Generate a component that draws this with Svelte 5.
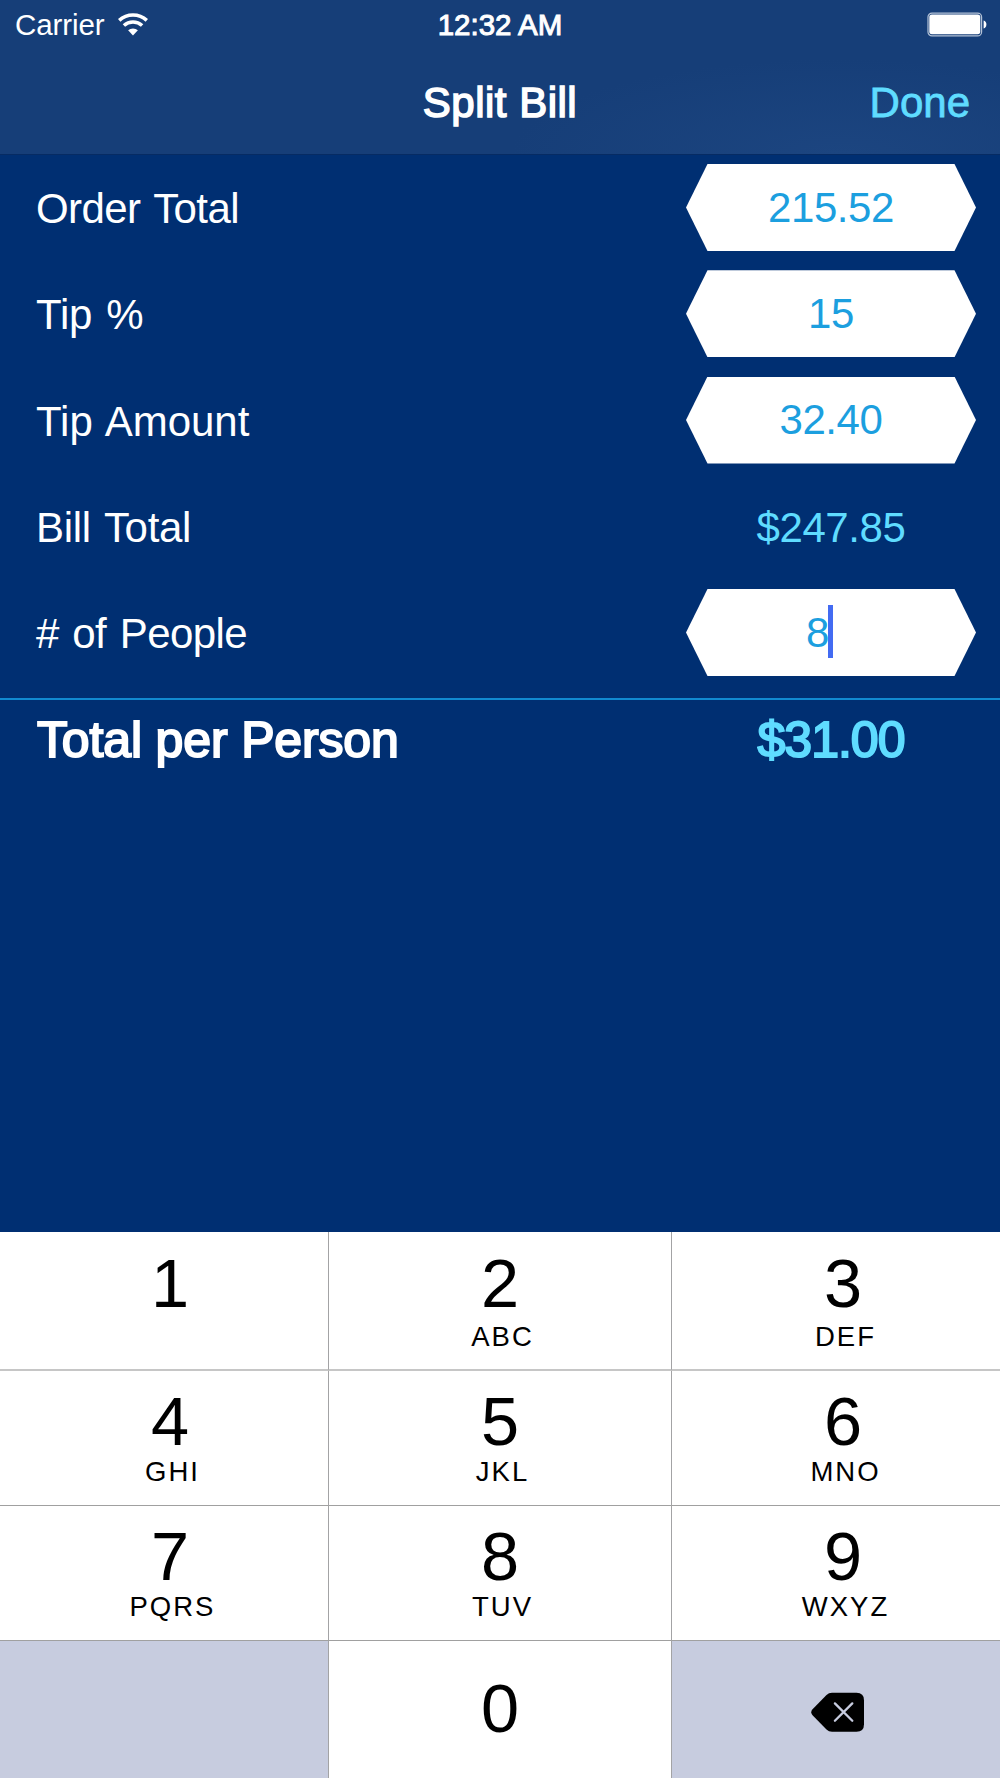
<script>
  const rows = [
    { label: 'Order Total', tracking: -0.6, value: '215.52', field: true },
    { label: 'Tip %', tracking: -0.2, value: '15', field: true },
    { label: 'Tip Amount', tracking: 0, value: '32.40', field: true },
    { label: 'Bill Total', tracking: -0.3, value: '$247.85', field: false },
    { label: '# of People', tracking: -0.6, value: '8', field: true, active: true }
  ];

  const keys = [
    { digit: '1', letters: '' },
    { digit: '2', letters: 'ABC' },
    { digit: '3', letters: 'DEF' },
    { digit: '4', letters: 'GHI' },
    { digit: '5', letters: 'JKL' },
    { digit: '6', letters: 'MNO' },
    { digit: '7', letters: 'PQRS' },
    { digit: '8', letters: 'TUV' },
    { digit: '9', letters: 'WXYZ' }
  ];
</script>

<div class="screen">
  <header>
    <div class="status">
      <div class="carrier">
        <span>Carrier</span>
        <svg class="wifi" width="30" height="23" viewBox="0 0 30 23" fill="none" stroke="#fff">
          <path d="M1.2 7.4A20.4 20.4 0 0 1 28.8 7.4" stroke-width="3.6" />
          <path d="M5.900 12.500A13.400 13.400 0 0 1 24.100 12.500" stroke-width="3.500" />
          <path d="M10.100 17.300A7.300 7.300 0 0 1 19.900 17.300L15 22.400Z" fill="#fff" stroke="none" />
        </svg>
      </div>
      <span class="time">12:32 AM</span>
      <svg class="battery" width="60" height="25" viewBox="0 0 60 25">
        <rect x="1" y="1.1" width="53.6" height="22.8" rx="4" fill="none" stroke="#b4c2d6" stroke-width="1.2" />
        <rect x="2.3" y="2.4" width="51" height="19.8" rx="2.6" fill="#fff" />
        <path d="M56.6 8.6Q59.4 9.4 59.4 12.6T56.6 16.6Z" fill="#fff" />
      </svg>
    </div>
    <nav>
      <span></span>
      <h1>Split Bill</h1>
      <button class="done">Done</button>
    </nav>
  </header>

  <main>
    <div class="rows">
      {#each rows as row}
        <div class="row">
          <span class="label" style="letter-spacing: {row.tracking}px">{row.label}</span>
          {#if row.field}
            <div class="value field" class:active={row.active}>
              <span class="num">{row.value}</span>
              {#if row.active}<i class="caret"></i>{/if}
            </div>
          {:else}
            <div class="value computed">{row.value}</div>
          {/if}
        </div>
      {/each}
    </div>
    <div class="total">
      <span class="total-label">Total per Person</span>
      <div class="value total-value">$31.00</div>
    </div>
  </main>

  <div class="keypad">
    {#each keys as key}
      <button class="key">
        <span class="digit">{key.digit}</span>
        <span class="letters">{key.letters}</span>
      </button>
    {/each}
    <div class="key blank"></div>
    <button class="key zero"><span class="digit">0</span></button>
    <button class="key blank erase" aria-label="Delete">
      <svg width="54" height="40" viewBox="0 0 54 40">
        <path d="M21 .7H45.500Q53 .7 53 8.200V32.200Q53 39.700 45.500 39.700H21Q17.800 39.700 15.500 37.500L1.300 22.900Q-.8 20.200 1.300 17.500L15.500 2.900Q17.800 .7 21 .7Z" fill="#000" />
        <path d="M23.900 11.400L41.300 28.800M41.300 11.400L23.900 28.800" stroke="#c7ccdf" stroke-width="2.300" stroke-linecap="round" />
      </svg>
    </button>
  </div>
</div>

<style>
  :global(body) {
    margin: 0;
    background: #002f72;
  }

  .screen {
    width: 1000px;
    height: 1778px;
    display: flex;
    flex-direction: column;
    overflow: hidden;
    background: #002f72;
    color: #fff;
    font-family: 'Liberation Sans', Arial, sans-serif;
  }

  button {
    margin: 0;
    padding: 0;
    border: 0;
    background: none;
    color: inherit;
    font: inherit;
  }

  header {
    height: 155px;
    flex: none;
    box-sizing: border-box;
    border-bottom: 1px solid #062b63;
    background:
      radial-gradient(ellipse 330px 95px at 840px 100%, #1c4580, transparent),
      #163e78;
  }

  .status {
    height: 48px;
    box-sizing: border-box;
    padding: 2px 13px 0 15px;
    display: grid;
    grid-template-columns: 1fr auto 1fr;
    align-items: center;
    font-size: 29.5px;
  }

  .carrier {
    display: flex;
    align-items: center;
    gap: 14px;
    letter-spacing: -0.1px;
  }

  .wifi {
    margin-bottom: 2px;
  }

  .time {
    margin-right: 2px;
    -webkit-text-stroke: 1px #fff;
  }

  .battery {
    justify-self: end;
    margin-bottom: 1px;
  }

  nav {
    height: 106px;
    box-sizing: border-box;
    padding: 3px 30px 0;
    display: grid;
    grid-template-columns: 1fr auto 1fr;
    align-items: center;
    font-size: 42px;
  }

  h1 {
    margin: 0;
    font-size: 42px;
    font-weight: 400;
    letter-spacing: 0.5px;
    -webkit-text-stroke: 1.500px #fff;
  }

  .done {
    justify-self: end;
    color: #5fdcff;
    -webkit-text-stroke: 0.800px #5fdcff;
  }

  main {
    flex: 1;
    margin-top: -0.6px;
  }

  .row,
  .total {
    display: flex;
    align-items: center;
    justify-content: space-between;
    padding: 0 24px 0 36px;
  }

  .row {
    height: 106.250px;
    font-size: 42px;
  }

  .label {
    padding-top: 3px;
    word-spacing: 2.500px;
  }

  .value {
    width: 290px;
    height: 87px;
    display: flex;
    align-items: center;
    justify-content: center;
    letter-spacing: -0.4px;
  }

  .field {
    box-sizing: border-box;
    background: #fff;
    color: #1c9fdf;
    clip-path: polygon(21.500px 0, 268.500px 0, 100% 50%, 268.500px 100%, 21.500px 100%, 0 50%);
  }

  .active {
    padding-right: 23px;
  }

  .caret {
    width: 5px;
    height: 53px;
    margin: 0 0 2px -1px;
    background: #436bf2;
  }

  .computed {
    box-sizing: border-box;
    padding-top: 3px;
    color: #5fdcff;
  }

  .rows {
    padding-bottom: 12.600px;
    border-bottom: 2px solid #118ad0;
  }

  .total {
    height: 78px;
    padding-top: 1px;
    font-size: 50px;
  }

  .total-label {
    padding-left: 1px;
    letter-spacing: -0.15px;
    -webkit-text-stroke: 2px #fff;
  }

  .total-value {
    color: #5fdcff;
    letter-spacing: -1px;
    -webkit-text-stroke: 2px #5fdcff;
  }

  .keypad {
    flex: none;
    display: grid;
    grid-template-columns: 329px 343px 328px;
    grid-template-rows: 139px 135px 135px 137px;
    background: #fff;
    color: #000;
  }

  .key {
    box-sizing: border-box;
    display: flex;
    flex-direction: column;
    align-items: center;
    padding-top: 11px;
    border-right: 1px solid #a3a3a5;
    border-bottom: 1px solid #a0a0a0;
  }

  .key:nth-child(-n + 3) {
    padding-top: 12px;
    border-bottom: 2px solid #c6c6c6;
  }

  .key:nth-child(3n + 1) {
    padding-left: 12px;
  }

  .key:nth-child(3n) {
    padding-left: 14px;
    border-right: 0;
  }

  .key:nth-child(n + 10) {
    border-bottom: 0;
  }

  .digit {
    font-size: 68.500px;
    line-height: 80px;
  }

  .letters {
    margin-top: -6px;
    padding-left: 5px;
    font-size: 27.500px;
    line-height: 32px;
    letter-spacing: 2px;
  }

  .key:nth-child(-n + 3) .letters {
    margin-top: -3px;
  }

  .key.zero {
    padding-top: 28px;
  }

  .blank {
    background: #c7ccdf;
  }

  .key.erase {
    justify-content: center;
    padding-top: 23px;
    padding-left: 14px;
    padding-right: 10px;
    padding-bottom: 18px;
  }
</style>
